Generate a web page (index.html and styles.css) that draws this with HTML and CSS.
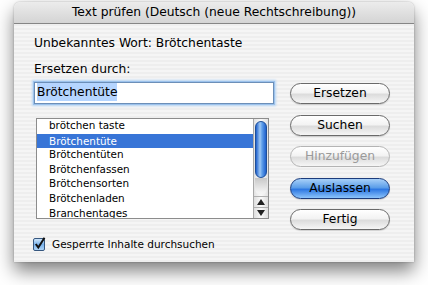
FILE: index.html
```html
<!DOCTYPE html>
<html lang="de">
<head>
  <meta charset="utf-8">
  <title>Text prüfen</title>
  <link rel="stylesheet" href="styles.css">
</head>
<body>
<div class="window">
  <div class="titlebar">Text prüfen (Deutsch (neue Rechtschreibung))</div>
  <div class="content">
    <div class="left">
      <div class="label first">Unbekanntes Wort: Brötchentaste</div>
      <div class="label second">Ersetzen durch:</div>
      <div class="field"><span class="sel">Brötchentüte</span></div>
      <div class="list">
        <ul class="rows">
          <li>brötchen taste</li>
          <li class="selected">Brötchentüte</li>
          <li>Brötchentüten</li>
          <li>Brötchenfassen</li>
          <li>Brötchensorten</li>
          <li>Brötchenladen</li>
          <li>Branchentages</li>
        </ul>
        <div class="scroll">
          <div class="thumb"></div>
          <div class="track"></div>
          <div class="arrow">
            <svg width="8" height="6" viewBox="0 0 8 6"><path d="M4 0 L8 6 L0 6 Z" fill="#222"/></svg>
          </div>
          <div class="arrow">
            <svg width="8" height="6" viewBox="0 0 8 6"><path d="M0 0 L8 0 L4 6 Z" fill="#222"/></svg>
          </div>
        </div>
      </div>
      <div class="check">
        <svg width="14" height="14" viewBox="0 0 14 14">
          <defs>
            <linearGradient id="cb" x1="0" y1="0" x2="0" y2="1">
              <stop offset="0" stop-color="#d6ebfd"/>
              <stop offset="0.5" stop-color="#78b1ea"/>
              <stop offset="1" stop-color="#b3d8fa"/>
            </linearGradient>
          </defs>
          <rect x="0.5" y="1.5" width="11" height="12" rx="1.5" fill="url(#cb)" stroke="#36577f"/>
          <path d="M2.8 7 L5.3 10.5 L11.5 0.8" fill="none" stroke="#111" stroke-width="2"/>
        </svg>
        <span>Gesperrte Inhalte durchsuchen</span>
      </div>
    </div>
    <div class="buttons">
      <div class="btn">Ersetzen</div>
      <div class="btn">Suchen</div>
      <div class="btn disabled">Hinzufügen</div>
      <div class="btn default">Auslassen</div>
      <div class="btn">Fertig</div>
    </div>
  </div>
</div>
</body>
</html>
```
FILE: styles.css
```css
body, html { margin: 0; padding: 0; background: white; }
body {
  width: 428px;
  height: 285px;
  overflow: hidden;
  font-family: "DejaVu Sans", sans-serif;
  color: black;
}

.window {
  margin: 2px 0 0 14px;
  width: 400px;
  height: 260px;
  border-radius: 6px 6px 0 0;
  box-shadow: 0 9px 18px rgba(0,0,0,0.5), 0 0 2px rgba(0,0,0,0.3);
  overflow: hidden;
}

.titlebar {
  height: 21px;
  line-height: 21px;
  text-align: center;
  font-size: 12.3px;
  background: linear-gradient(#ececec, #d4d4d4);
  border-bottom: 1px solid #858585;
}

.content {
  display: flex;
  gap: 16px;
  height: 238px;
  padding: 11px 20px 0 20px;
  box-sizing: border-box;
  background: repeating-linear-gradient(to bottom, #eeeeee 0 2px, #f5f5f5 2px 4px);
}

.left { width: 240px; }

.label {
  font-size: 12.3px;
  height: 16px;
  line-height: 16px;
}
.second { margin-top: 10px; }

.field {
  margin-top: 5px;
  height: 22px;
  box-sizing: border-box;
  background: white;
  border: 1px solid #6c8fb8;
  box-shadow: 0 0 0 1px #9cc2ec, 0 0 2px 2px #b8d6f5;
  font-size: 12.3px;
  line-height: 19px;
  padding-left: 2px;
}
.sel { background: #b5d5ff; padding: 2px 0 2px; }

.list {
  margin: 14px 0 0 2px;
  width: 233px;
  height: 101px;
  box-sizing: border-box;
  border: 1px solid #8c8c8c;
  background: white;
  display: flex;
  overflow: hidden;
}
.rows {
  list-style: none;
  margin: 0;
  padding: 0;
  flex: 1;
  font-size: 10.4px;
}
.rows li {
  height: 14.6px;
  line-height: 12px;
  padding-left: 12px;
}
.rows li.selected { background: #3875d7; color: white; line-height: 14px; }

.scroll {
  width: 14px;
  border-left: 1px solid #a8a8a8;
  display: flex;
  flex-direction: column;
  background: linear-gradient(to right, #e2e2e2, #fafafa 50%, #e2e2e2);
}
.thumb {
  margin: 2px 1px 0 1px;
  height: 55px;
  border-radius: 6px;
  border: 1px solid #1d4f9a;
  background: linear-gradient(to right, #1f60cc, #9ec8f4 40%, #5f9fea 60%, #1f60cc);
}
.track {
  flex: 1;
  background: linear-gradient(#c8c8c8, #f3f3f3 14px, transparent 20px);
  border-radius: 0 0 6px 6px;
  margin: 0 1px 1px 1px;
}
.arrow {
  height: 10px;
  border-top: 1px solid #b0b0b0;
  display: flex;
  align-items: center;
  justify-content: center;
  background: linear-gradient(to right, #dedede, #fbfbfb 50%, #dedede);
}

.check {
  margin-top: 18px;
  display: flex;
  align-items: center;
  gap: 5px;
  font-size: 10.5px;
  margin-left: -1px;
}
.check svg { display: block; }

.buttons {
  width: 100px;
  padding-top: 48px;
  display: flex;
  flex-direction: column;
  gap: 10.5px;
}
.btn {
  height: 21px;
  box-sizing: border-box;
  border: 1px solid #6a6a6a;
  border-radius: 11px;
  background: linear-gradient(#ffffff, #f3f3f3 45%, #dcdcdc 55%, #f6f6f6);
  text-align: center;
  font-size: 12.3px;
  line-height: 19px;
  box-shadow: 0 1px 1px rgba(0,0,0,0.15);
}
.btn.disabled {
  color: #9a9a9a;
  border-color: #b4b4b4;
  box-shadow: none;
}
.btn.default {
  border-color: #1c3c7c;
  background: linear-gradient(#a8d0f8, #5c9ee9 45%, #2e78e2 55%, #8cc4fb);
}
```
